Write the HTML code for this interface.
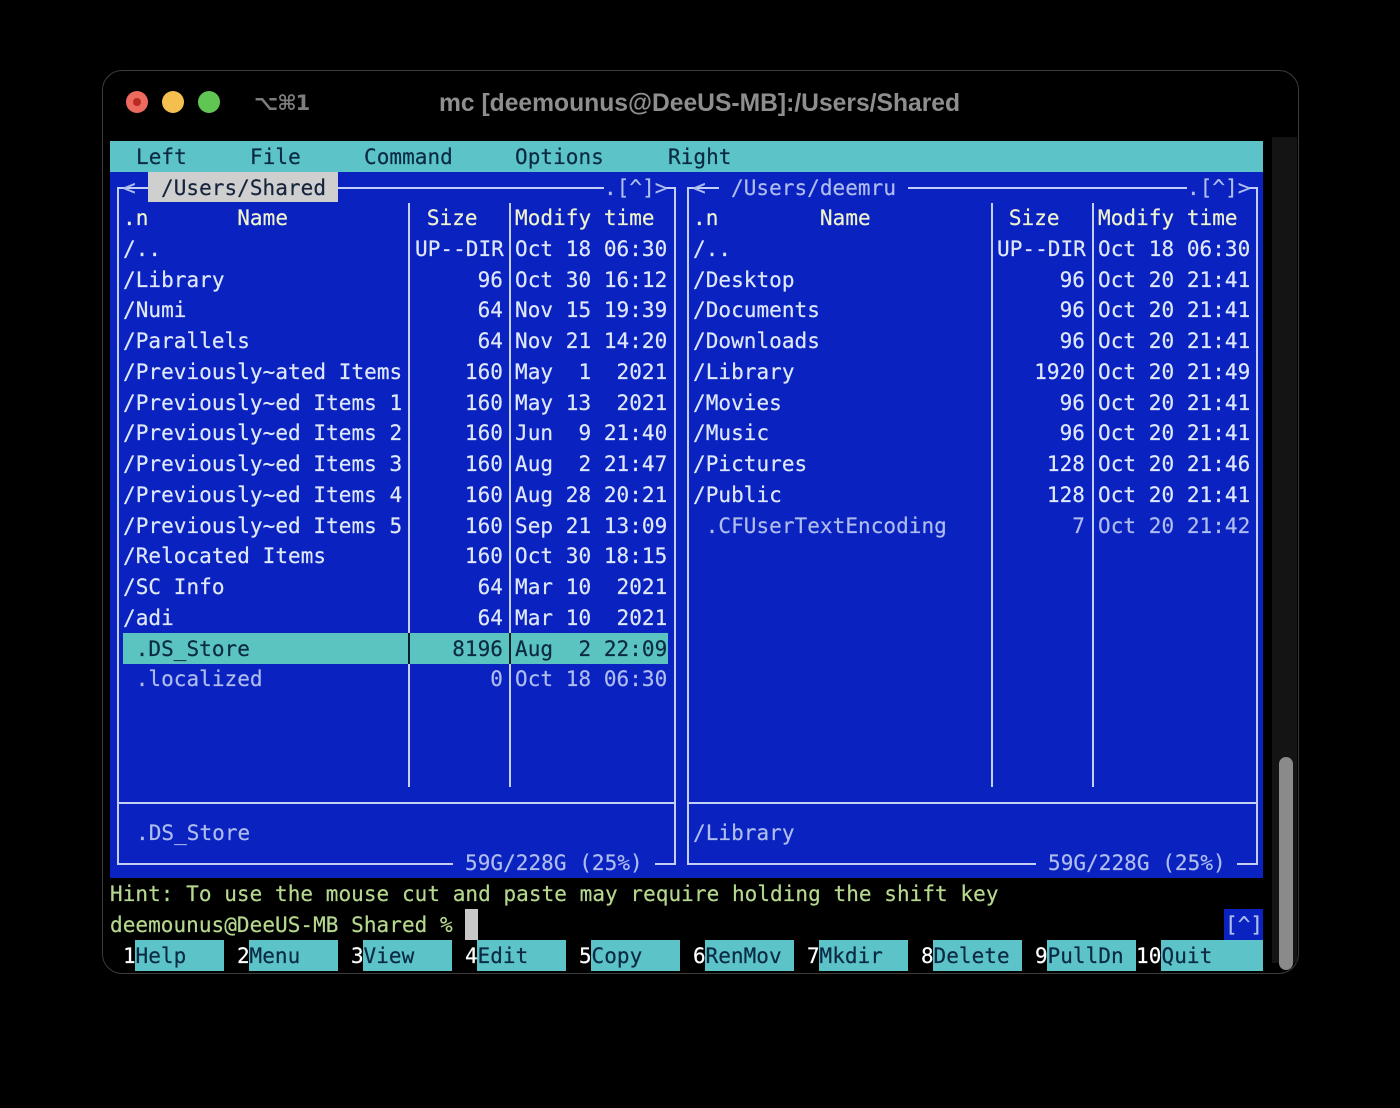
<!DOCTYPE html>
<html><head><meta charset="utf-8"><style>
html,body{margin:0;padding:0;background:#000;width:1400px;height:1108px;overflow:hidden}
#win{position:absolute;left:102px;top:69.5px;width:1197px;height:904px;border:1.5px solid #3c3c3c;border-radius:20px;background:#000;box-sizing:border-box}
.a{position:absolute}
pre{position:absolute;margin:0;font:21px/30.75px "DejaVu Sans Mono","Liberation Mono",monospace;letter-spacing:.05px;color:#dfe8fb;white-space:pre;-webkit-text-stroke:.2px currentColor}
.l{position:absolute;background:#c3cff5}
.h{color:#eff3cf}
.f{color:#aebcee}
.b{color:#aebcee}
.k{color:#0a2a44}
.w{color:#fff}
.fk{position:absolute;top:940px;height:30.5px;background:#5cc4c8}
</style></head><body>
<div id="win"></div>
<div class="a" style="left:126px;top:91px;width:22px;height:22px;border-radius:50%;background:#ec6a5e"></div>
<div class="a" style="left:133px;top:98px;width:8px;height:8px;border-radius:50%;background:#b92a22"></div>
<div class="a" style="left:162px;top:91px;width:22px;height:22px;border-radius:50%;background:#f4bf4f"></div>
<div class="a" style="left:198px;top:91px;width:22px;height:22px;border-radius:50%;background:#61c554"></div>
<div class="a" style="left:254px;top:89px;font:bold 21px/28px 'DejaVu Sans','Liberation Sans',sans-serif;color:#7c7c7c;white-space:nowrap;letter-spacing:-1px">⌥⌘1</div>
<div class="a" style="left:439px;top:88.5px;font:bold 24.65px/30px 'Liberation Sans',sans-serif;color:#8e8e8e;white-space:nowrap">mc [deemounus@DeeUS-MB]:/Users/Shared</div>

<div class="a" style="left:1272px;top:137px;width:25px;height:826px;background:#141414"></div>
<div class="a" style="left:1279px;top:757px;width:14px;height:213px;border-radius:7px;background:#8a8a8a"></div>

<div class="a" style="left:110px;top:141px;width:1153px;height:31px;background:#5cc4c8"></div>
<div class="a" style="left:110px;top:172px;width:1153px;height:706px;background:#0a22c0"></div>
<pre class="k" style="left:136px;top:141.5px">Left</pre>
<pre class="k" style="left:250px;top:141.5px">File</pre>
<pre class="k" style="left:364px;top:141.5px">Command</pre>
<pre class="k" style="left:515px;top:141.5px">Options</pre>
<pre class="k" style="left:668px;top:141.5px">Right</pre>

<!-- left box -->
<div class="l" style="left:117px;top:187px;width:2px;height:677px"></div>
<div class="l" style="left:674px;top:187px;width:2px;height:677px"></div>
<div class="l" style="left:117px;top:187px;width:32px;height:2px"></div>
<div class="l" style="left:338px;top:187px;width:266px;height:2px"></div>
<div class="l" style="left:666px;top:187px;width:10px;height:2px"></div>
<div class="l" style="left:117px;top:802px;width:559px;height:2px"></div>
<div class="l" style="left:117px;top:863px;width:336px;height:2px"></div>
<div class="l" style="left:655px;top:863px;width:21px;height:2px"></div>
<div class="l" style="left:408px;top:203px;width:2px;height:584px"></div>
<div class="l" style="left:509px;top:203px;width:2px;height:584px"></div>
<!-- right box -->
<div class="l" style="left:687px;top:187px;width:2px;height:677px"></div>
<div class="l" style="left:1256px;top:187px;width:2px;height:677px"></div>
<div class="l" style="left:687px;top:187px;width:32px;height:2px"></div>
<div class="l" style="left:908px;top:187px;width:279px;height:2px"></div>
<div class="l" style="left:1249px;top:187px;width:9px;height:2px"></div>
<div class="l" style="left:687px;top:802px;width:571px;height:2px"></div>
<div class="l" style="left:687px;top:863px;width:349px;height:2px"></div>
<div class="l" style="left:1237px;top:863px;width:21px;height:2px"></div>
<div class="l" style="left:990.5px;top:203px;width:2px;height:584px"></div>
<div class="l" style="left:1091.5px;top:203px;width:2px;height:584px"></div>

<!-- titles -->
<pre class="b" style="left:123px;top:172.5px">&lt;</pre>
<div class="a" style="left:148px;top:172px;width:190px;height:30px;background:#cfcfcf"></div>
<pre style="left:161px;top:172.5px;color:#15243c">/Users/Shared</pre>
<pre class="b" style="left:604px;top:172.5px">.[^]&gt;</pre>
<pre class="b" style="left:693px;top:172.5px">&lt;</pre>
<pre class="b" style="left:731px;top:172.5px">/Users/deemru</pre>
<pre class="b" style="left:1187px;top:172.5px">.[^]&gt;</pre>

<!-- selection -->
<div class="a" style="left:123px;top:633px;width:545px;height:30.5px;background:#5cc4c0"></div>
<div class="a" style="left:408px;top:633px;width:2px;height:31px;background:#06202e"></div>
<div class="a" style="left:509px;top:633px;width:2px;height:31px;background:#06202e"></div>

<!-- left columns -->
<pre style="left:123px;top:203px"><span class="h">.n       Name</span>
/..
/Library
/Numi
/Parallels
/Previously~ated Items
/Previously~ed Items 1
/Previously~ed Items 2
/Previously~ed Items 3
/Previously~ed Items 4
/Previously~ed Items 5
/Relocated Items
/SC Info
/adi
<span class="k"> .DS_Store</span>
<span class="f"> .localized</span></pre>
<pre style="left:415px;top:203px;text-align:right;width:88px"><span class="h">Size  </span>
UP--DIR
96
64
64
160
160
160
160
160
160
160
64
64
<span class="k">8196</span>
<span class="f">0</span></pre>
<pre style="left:515px;top:203px"><span class="h">Modify time</span>
Oct 18 06:30
Oct 30 16:12
Nov 15 19:39
Nov 21 14:20
May  1  2021
May 13  2021
Jun  9 21:40
Aug  2 21:47
Aug 28 20:21
Sep 21 13:09
Oct 30 18:15
Mar 10  2021
Mar 10  2021
<span class="k">Aug  2 22:09</span>
<span class="f">Oct 18 06:30</span></pre>

<!-- right columns -->
<pre style="left:693px;top:203px"><span class="h">.n        Name</span>
/..
/Desktop
/Documents
/Downloads
/Library
/Movies
/Music
/Pictures
/Public
<span class="f"> .CFUserTextEncoding</span></pre>
<pre style="left:997px;top:203px;text-align:right;width:88px"><span class="h">Size  </span>
UP--DIR
96
96
96
1920
96
96
128
128
<span class="f">7</span></pre>
<pre style="left:1098px;top:203px"><span class="h">Modify time</span>
Oct 18 06:30
Oct 20 21:41
Oct 20 21:41
Oct 20 21:41
Oct 20 21:49
Oct 20 21:41
Oct 20 21:41
Oct 20 21:46
Oct 20 21:41
<span class="f">Oct 20 21:42</span></pre>

<pre class="f" style="left:136px;top:817.5px">.DS_Store</pre>
<pre class="f" style="left:693px;top:817.5px">/Library</pre>
<pre class="b" style="left:465px;top:848px">59G/228G (25%)</pre>
<pre class="b" style="left:1048px;top:848px">59G/228G (25%)</pre>

<pre style="left:110px;top:879px;color:#b6d88e">Hint: To use the mouse cut and paste may require holding the shift key</pre>
<pre style="left:110px;top:909.5px;color:#b6d88e">deemounus@DeeUS-MB Shared %</pre>
<div class="a" style="left:465px;top:909px;width:13px;height:31px;background:#c8c8c8"></div>
<div class="a" style="left:1224px;top:909px;width:39px;height:31px;background:#0a22c0"></div>
<pre class="b" style="left:1225px;top:909.5px">[^]</pre>

<!-- function keys -->
<div class="fk" style="left:135px;width:89px"></div>
<div class="fk" style="left:249px;width:89px"></div>
<div class="fk" style="left:363px;width:89px"></div>
<div class="fk" style="left:477px;width:89px"></div>
<div class="fk" style="left:591px;width:89px"></div>
<div class="fk" style="left:705px;width:89px"></div>
<div class="fk" style="left:819px;width:89px"></div>
<div class="fk" style="left:933px;width:89px"></div>
<div class="fk" style="left:1047px;width:89px"></div>
<div class="fk" style="left:1161px;width:102px"></div>
<pre class="w" style="left:123px;top:940.5px">1</pre><pre class="k" style="left:135.5px;top:940.5px">Help</pre>
<pre class="w" style="left:237px;top:940.5px">2</pre><pre class="k" style="left:249.5px;top:940.5px">Menu</pre>
<pre class="w" style="left:351px;top:940.5px">3</pre><pre class="k" style="left:363.5px;top:940.5px">View</pre>
<pre class="w" style="left:465px;top:940.5px">4</pre><pre class="k" style="left:477.5px;top:940.5px">Edit</pre>
<pre class="w" style="left:579px;top:940.5px">5</pre><pre class="k" style="left:591.5px;top:940.5px">Copy</pre>
<pre class="w" style="left:693px;top:940.5px">6</pre><pre class="k" style="left:705.5px;top:940.5px">RenMov</pre>
<pre class="w" style="left:807px;top:940.5px">7</pre><pre class="k" style="left:819.5px;top:940.5px">Mkdir</pre>
<pre class="w" style="left:921px;top:940.5px">8</pre><pre class="k" style="left:933.5px;top:940.5px">Delete</pre>
<pre class="w" style="left:1035px;top:940.5px">9</pre><pre class="k" style="left:1047.5px;top:940.5px">PullDn</pre>
<pre class="w" style="left:1136px;top:940.5px">10</pre><pre class="k" style="left:1161.5px;top:940.5px">Quit</pre>
</body></html>
